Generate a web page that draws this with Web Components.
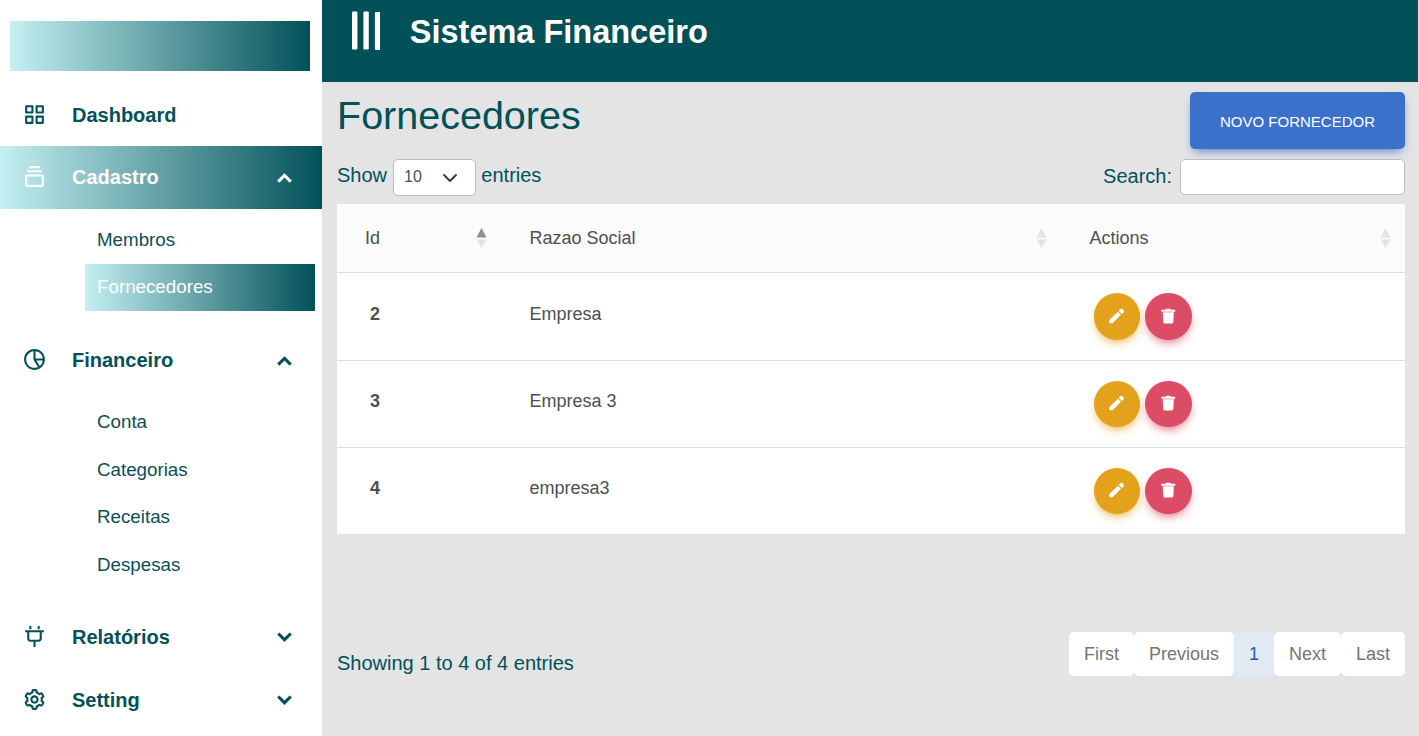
<!DOCTYPE html>
<html lang="pt-BR">
<head>
<meta charset="utf-8">
<title>Sistema Financeiro</title>
<style>
body{margin:0;font-family:"Liberation Sans",Arial,sans-serif;color:#025159;background:#e4e4e4}
</style>
</head>
<body>
<finance-app></finance-app>
<script>
const define=(name,html)=>{
  const t=document.createElement('template');
  t.innerHTML=html;
  customElements.define(name,class extends HTMLElement{
    constructor(){super();this.attachShadow({mode:'open'}).append(t.content.cloneNode(true));}
  });
};

/* Icon set, 24-unit grid */
const ICONS={
  grid:'M10 3H4a1 1 0 0 0-1 1v6a1 1 0 0 0 1 1h6a1 1 0 0 0 1-1V4a1 1 0 0 0-1-1zM9 9H5V5h4v4zm11-6h-6a1 1 0 0 0-1 1v6a1 1 0 0 0 1 1h6a1 1 0 0 0 1-1V4a1 1 0 0 0-1-1zm-1 6h-4V5h4v4zm-9 4H4a1 1 0 0 0-1 1v6a1 1 0 0 0 1 1h6a1 1 0 0 0 1-1v-6a1 1 0 0 0-1-1zm-1 6H5v-4h4v4zm11-6h-6a1 1 0 0 0-1 1v6a1 1 0 0 0 1 1h6a1 1 0 0 0 1-1v-6a1 1 0 0 0-1-1zm-1 6h-4v-4h4v4z',
  collection:'M19 10H5c-1.103 0-2 .897-2 2v8c0 1.103.897 2 2 2h14c1.103 0 2-.897 2-2v-8c0-1.103-.897-2-2-2zM5 20v-8h14l.002 8H5zM5 6h14v2H5zm2-4h10v2H7z',
  pie:'M12 2C6.486 2 2 6.486 2 12s4.486 10 10 10 10-4.486 10-10S17.514 2 12 2zm7.931 9H13V4.069A8.008 8.008 0 0 1 19.931 11zM4 12c0-4.072 3.061-7.436 7-7.931V12a.996.996 0 0 0 .111.438c.015.03.022.063.041.093l4.202 6.723A7.949 7.949 0 0 1 12 20c-4.411 0-8-3.589-8-8zm13.052 6.196L13.805 13h6.126a7.992 7.992 0 0 1-2.879 5.196z',
  plug:'M3 6v2h2v6c0 1.654 1.346 3 3 3h3v5h2v-5h3c1.654 0 3-1.346 3-3V8h2V6H3zm14 8c0 .552-.449 1-1 1H8c-.551 0-1-.448-1-1V8h10v6zM7 2h2v3H7zM15 2h2v3h-2z',
  cog:'M12 16c2.206 0 4-1.794 4-4s-1.794-4-4-4-4 1.794-4 4 1.794 4 4 4zm0-6c1.084 0 2 .916 2 2s-.916 2-2 2-2-.916-2-2 .916-2 2-2zM2.845 16.136l1 1.73c.531.917 1.809 1.261 2.73.73l.529-.306A8.1 8.1 0 0 0 9 19.402V20c0 1.103.897 2 2 2h2c1.103 0 2-.897 2-2v-.598a8.132 8.132 0 0 0 1.896-1.111l.529.306c.923.53 2.198.188 2.731-.731l.999-1.729a2.001 2.001 0 0 0-.731-2.732l-.505-.292a7.718 7.718 0 0 0 0-2.224l.505-.292a2.002 2.002 0 0 0 .731-2.732l-.999-1.729c-.531-.92-1.808-1.265-2.731-.732l-.529.306A8.1 8.1 0 0 0 15 4.598V4c0-1.103-.897-2-2-2h-2c-1.103 0-2 .897-2 2v.598a8.132 8.132 0 0 0-1.896 1.111l-.529-.306c-.924-.531-2.2-.187-2.731.732l-.999 1.729a2.001 2.001 0 0 0 .731 2.732l.505.292a7.683 7.683 0 0 0 0 2.223l-.505.292a2.003 2.003 0 0 0-.731 2.733zm3.326-2.758A5.703 5.703 0 0 1 6 12c0-.462.058-.926.17-1.378a.999.999 0 0 0-.47-1.108l-1.123-.65.998-1.729 1.145.662a.997.997 0 0 0 1.188-.142 6.071 6.071 0 0 1 2.384-1.399A1 1 0 0 0 11 5.3V4h2v1.3a1 1 0 0 0 .708.956 6.083 6.083 0 0 1 2.384 1.399.999.999 0 0 0 1.188.142l1.144-.661 1 1.729-1.124.649a1 1 0 0 0-.47 1.108c.112.452.17.916.17 1.378 0 .461-.058.925-.171 1.378a1 1 0 0 0 .471 1.108l1.123.649-.998 1.729-1.145-.661a.996.996 0 0 0-1.188.142 6.071 6.071 0 0 1-2.384 1.399A1 1 0 0 0 13 18.7l.002 1.3H11v-1.3a1 1 0 0 0-.708-.956 6.083 6.083 0 0 1-2.384-1.399.992.992 0 0 0-1.188-.141l-1.144.662-1-1.729 1.124-.651a1 1 0 0 0 .471-1.108z',
  down:'M16.939 6.139 12 11.079l-4.939-4.94-2.122 2.122L12 15.321l7.061-7.06z',
  up:'M4.939 13.939l2.122 2.122L12 11.121l4.939 4.94 2.122-2.122L12 6.879z',
  pencil:'M2 17.5 14.2 5.3 18.8 9.9 6.6 22.1H2zM15.4 4.1 17.6 1.9a2.6 2.6 0 0 1 3.6 0l1.2 1.2a2.6 2.6 0 0 1 0 3.6L20 8.7z',
  trash:'M2 2.4h6l1-1.3h6l1 1.3h6v3.1H2zM4 6.2h16l-.7 14.2a2 2 0 0 1-2 1.9H6.7a2 2 0 0 1-2-1.9z'
};
customElements.define('app-icon',class extends HTMLElement{
  connectedCallback(){
    const root=this.shadowRoot||this.attachShadow({mode:'open'});
    root.innerHTML=`<style>:host{display:block;width:25px;height:25px;flex:none}svg{display:block;width:100%;height:100%;fill:currentColor}</style>
      <svg viewBox="0 0 24 24"><path d="${ICONS[this.getAttribute('name')]}"/></svg>`;
  }
});

define('nav-item',`<style>
  :host{display:flex;align-items:center;height:63px;padding:0 25px 0 22px;font-weight:700;font-size:20px;line-height:24px}
  :host([active]){background:linear-gradient(to right,#c4f0f2,#025159);color:#fff}
  .label{flex:1;margin-left:25px;padding-bottom:1px}
  :host([plain]) .label{padding:1px 0 0}
  ::slotted([slot=icon]){margin-top:-2px}
  :host([plain]) ::slotted([slot=icon]){margin-top:-1px}
  ::slotted([slot=arrow]){margin-top:2px}
</style><slot name="icon"></slot><span class="label"><slot></slot></span><slot name="arrow"></slot>`);

define('nav-sub',`<style>
  :host{display:flex;align-items:center;box-sizing:border-box;height:47px;width:230px;margin-left:85px;padding-left:12px;font-size:18.75px;color:#0d4e57}
  :host([active]){background:linear-gradient(to right,#c4f0f2,#025159);color:#fff}
  span{margin-top:-2px}
</style><span><slot></slot></span>`);

define('side-bar',`<style>
  :host{display:block;width:322px;background:#fff;overflow:hidden}
  .logo{height:50px;margin:21px 12px 12px 10px;background:linear-gradient(to right,#c4f0f2,#025159)}
  .first{padding:8px 0 18px}
  .second{display:grid;row-gap:.5px;padding:7.6px 0 16.9px}
</style>
<div class="logo"></div>
<nav-item plain><app-icon slot="icon" name="grid"></app-icon>Dashboard</nav-item>
<nav-item active><app-icon slot="icon" name="collection"></app-icon>Cadastro<app-icon slot="arrow" name="up"></app-icon></nav-item>
<div class="first"><nav-sub>Membros</nav-sub><nav-sub active>Fornecedores</nav-sub></div>
<nav-item><app-icon slot="icon" name="pie"></app-icon>Financeiro<app-icon slot="arrow" name="up"></app-icon></nav-item>
<div class="second"><nav-sub>Conta</nav-sub><nav-sub>Categorias</nav-sub><nav-sub>Receitas</nav-sub><nav-sub>Despesas</nav-sub></div>
<nav-item><app-icon slot="icon" name="plug"></app-icon>Relatórios<app-icon slot="arrow" name="down"></app-icon></nav-item>
<nav-item><app-icon slot="icon" name="cog"></app-icon>Setting<app-icon slot="arrow" name="down"></app-icon></nav-item>`);

define('top-bar',`<style>
  :host{display:flex;align-items:flex-start;box-sizing:border-box;height:82px;background:#025159;color:#fff;padding:11px 0 0 29.7px}
  .bars{flex:none;width:28.5px;height:39px;margin-right:29.6px}
  .bars svg{display:block}
  h1{margin:2px 0 0;font-size:32.5px;line-height:38px;font-weight:700}
</style><div class="bars"><svg width="28.5" height="39" viewBox="0 0 28.5 39" fill="#fff"><rect y=".4" width="5.4" height="38.2" rx="1"/><rect x="11.4" y=".4" width="5.4" height="38.2" rx="1"/><rect x="22.9" y="1" width="5.4" height="38" rx="1"/></svg></div><h1><slot></slot></h1>`);

define('primary-button',`<style>
  :host{display:block}
  button{display:block;width:215px;height:57px;border:0;border-radius:5px;padding:2px 0 0;background:#3b71ca;color:#fff;font:15px "Liberation Sans",Arial,sans-serif;box-shadow:0 5px 11px -4px #3b71ca}
</style><button><slot></slot></button>`);

define('table-controls',`<style>
  :host{display:flex;justify-content:space-between;font-size:20px;height:37px}
  .side{display:flex;align-items:center}
  .select{display:flex;align-items:center;justify-content:space-between;box-sizing:border-box;width:83px;height:37px;margin:0 5.3px 0 6px;padding:0 17px 0 10px;border:1px solid #bdbdbd;border-radius:5px;background:#fff;color:#4f4f4f;font-size:16px}
  .select span{margin-top:-1px}
  input{box-sizing:border-box;width:225px;height:36px;margin:0 0 1px 8px;border:1px solid #bdbdbd;border-radius:5px;background:#fff}
  .text{margin-top:-4px}
  .search{margin-top:-3px}
</style>
<div class="side"><span class="text">Show</span><div class="select"><span>10</span><svg width="16" height="16" viewBox="0 0 16 16" fill="none" stroke="#343a40" stroke-width="1.9" stroke-linecap="round" stroke-linejoin="round"><path d="M2 5l6 6 6-6"/></svg></div><span class="text">entries</span></div>
<div class="side"><span class="search">Search:</span><input aria-label="Search"></div>`);

define('head-cell',`<style>
  :host{display:flex;align-items:center;justify-content:space-between;padding:0 15.5px 0 28px}
  :host([last]){padding-right:15px}
  svg{display:block;margin-right:-.5px}
  path{fill:#e3e3e3}
  :host([sorted]) .asc{fill:#8f8f8f}
</style><span><slot></slot></span><svg width="11" height="20" viewBox="0 0 11 20"><path class="asc" d="M5.5 0 10.5 9.5H.5z"/><path d="M5.5 20 10.5 11.5H.5z"/></svg>`);

define('round-button',`<style>
  :host{display:block}
  button{display:flex;align-items:center;justify-content:center;width:46.5px;height:46.5px;border:0;padding:0 0 1px;border-radius:50%;color:#fff;background:#e4a11b;box-shadow:0 5px 11px -4px #e4a11b}
  :host([danger]) button{background:#dc4c64;box-shadow:0 5px 11px -4px #dc4c64}
</style><button><slot></slot></button>`);

define('supplier-row',`<style>
  :host{display:grid;grid-template-columns:var(--cols);height:86.35px;border-top:1px solid #dedede;background:#fff}
  .id{font-weight:700;padding:30.4px 0 0 33px;line-height:20px}
  .name{padding:30.4px 0 0 28px;line-height:20px}
  .actions{display:flex;gap:5px;padding:20px 0 0 32px}
  .ic{width:16.6px;height:16.6px}
</style>
<div class="id"><slot name="id"></slot></div><div class="name"><slot></slot></div>
<div class="actions"><round-button><app-icon class="ic" name="pencil"></app-icon></round-button><round-button danger><app-icon class="ic" name="trash"></app-icon></round-button></div>`);

define('supplier-table',`<style>
  :host{display:block;font-size:18px;color:#4f4f4f;--cols:164.5px 560px 1fr}
  .head{display:grid;grid-template-columns:var(--cols);height:68.3px;background:#fbfbfb}
</style>
<div class="head"><head-cell sorted>Id</head-cell><head-cell>Razao Social</head-cell><head-cell last>Actions</head-cell></div>
<supplier-row><span slot="id">2</span>Empresa</supplier-row>
<supplier-row><span slot="id">3</span>Empresa 3</supplier-row>
<supplier-row><span slot="id">4</span>empresa3</supplier-row>`);

define('page-link',`<style>
  :host{display:block;box-sizing:border-box;height:44px;padding:0 15px;border-radius:5px;background:#fff;color:#757575;font-size:18px;line-height:44.5px}
  :host([active]){background:#e1e9f5;color:#2c58a0;box-shadow:0 2px 5px rgba(223,231,246,.6)}
</style><slot></slot>`);

define('table-footer',`<style>
  :host{display:flex;justify-content:space-between;align-items:flex-start;font-size:20px}
  .info{line-height:24px;margin-top:19px}
  .pages{display:flex}
</style><span class="info"><slot></slot></span>
<div class="pages"><page-link>First</page-link><page-link>Previous</page-link><page-link active>1</page-link><page-link>Next</page-link><page-link>Last</page-link></div>`);

define('finance-app',`<style>
  :host{display:grid;grid-template-columns:322px 1096px;height:736px;overflow:hidden;background:#e4e4e4;color:#025159}
  .content{padding:10px 13px 0 15px}
  .title{display:flex;justify-content:space-between;height:67px}
  h2{margin:0;font-size:39.5px;line-height:46px;font-weight:400}
  supplier-table{margin:8px 0 97.65px}
</style>
<side-bar></side-bar>
<main><top-bar>Sistema Financeiro</top-bar>
<div class="content">
<div class="title"><h2>Fornecedores</h2><primary-button>NOVO FORNECEDOR</primary-button></div>
<table-controls></table-controls>
<supplier-table></supplier-table>
<table-footer>Showing 1 to 4 of 4 entries</table-footer>
</div></main>`);
</script>
</body>
</html>
